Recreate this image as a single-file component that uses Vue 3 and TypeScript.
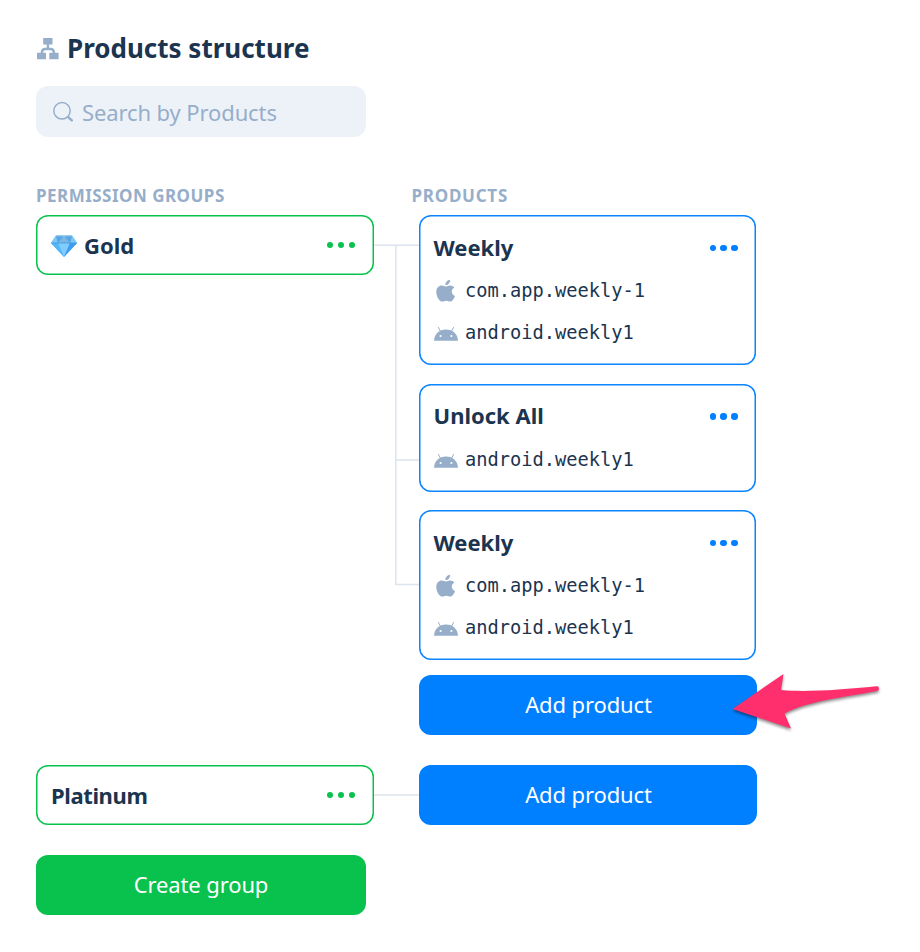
<script setup lang="ts">
interface Sku {
  platform: 'apple' | 'android'
  id: string
}
interface Product {
  name: string
  skus: Sku[]
}
interface Group {
  name: string
  gem: boolean
  height: number
  lines: string
  products: Product[]
}

const groups: Group[] = [
  {
    name: 'Gold',
    gem: true,
    height: 520,
    lines: 'M0 30.25H46M21.8 30V369.5H46M21.8 245H46',
    products: [
      {
        name: 'Weekly',
        skus: [
          { platform: 'apple', id: 'com.app.weekly-1' },
          { platform: 'android', id: 'android.weekly1' },
        ],
      },
      { name: 'Unlock All', skus: [{ platform: 'android', id: 'android.weekly1' }] },
      {
        name: 'Weekly',
        skus: [
          { platform: 'apple', id: 'com.app.weekly-1' },
          { platform: 'android', id: 'android.weekly1' },
        ],
      },
    ],
  },
  { name: 'Platinum', gem: false, height: 60, lines: 'M0 30H46', products: [] },
]
</script>

<template>
  <main class="page">
    <header class="heading">
      <svg class="tree" width="22" height="22" viewBox="0 0 22 22">
        <path d="M6.2 0h9.3v6.500H6.200zM0 14.800h9v6.500H0zM12.300 14.800h9.300v6.500h-9.300z" fill="#96aec9" />
        <path d="M10.900 6v5M4.900 15.500v-1q0-3.500 3.500-3.500h5q3.500 0 3.500 3.500v1" fill="none" stroke="#96aec9" stroke-width="2.400" />
      </svg>
      <h1>Products structure</h1>
    </header>

    <div class="search">
      <svg width="22" height="22" viewBox="0 0 22 22" fill="none" stroke="#96aec9" stroke-linecap="round">
        <circle cx="9" cy="9.800" r="8.200" stroke-width="1.500" />
        <path d="M15.500 16.300l3.300 3" stroke-width="2.500" />
      </svg>
      <span>Search by Products</span>
    </div>

    <div class="labels">
      <span class="label-groups">PERMISSION GROUPS</span>
      <span class="label-products">PRODUCTS</span>
    </div>

    <section v-for="group in groups" :key="group.name" class="row">
      <div class="card group">
        <svg v-if="group.gem" class="gem" width="26" height="22" viewBox="0 0 26 22">
          <path d="M5 0.5h16l5 7.500L13 22 0 8z" fill="#53b5f8" />
          <path d="M5 .5L0 8h7zM21 .5L26 8h-7z" fill="#79c9fb" />
          <path d="M5 .5h8L7 8zM13 .5h8L19 8z" fill="#5aa3dc" />
          <path d="M13 .5L7 8h12z" fill="#79b8e6" />
          <path d="M0 8h7l6 14z" fill="#52b7fa" />
          <path d="M7 8h12l-6 14z" fill="#7fcdff" />
          <path d="M19 8h7L13 22z" fill="#3f9cf0" />
          <path d="M.5 8h25" stroke="#3c8fd8" stroke-width=".7" />
          <path d="M5 .8h16" stroke="#a6dcf8" stroke-width=".8" />
        </svg>
        <strong :class="{ tight: !group.gem }">{{ group.name }}</strong>
        <i class="dots"><b /><b /><b /></i>
      </div>
      <svg class="lines" width="46" :height="group.height" fill="none" stroke="#dce4ed" stroke-width="1.500">
        <path :d="group.lines" />
      </svg>
      <div class="products">
        <article v-for="(product, i) in group.products" :key="i" class="card product">
          <div class="top">
            <strong>{{ product.name }}</strong>
            <i class="dots"><b /><b /><b /></i>
          </div>
          <div v-for="sku in product.skus" :key="sku.id" class="sku">
            <svg v-if="sku.platform === 'apple'" width="24" height="24" viewBox="0 0 24 24" fill="#96aec9">
              <path d="M16.200 .8c.1 3.100-2.200 5.500-4.800 5.300-.2-2.700 2.100-5 4.800-5.300z" />
              <path d="M11.900 7.500c1 0 2.200-1.100 4.100-1.100 1.900 0 3.400.9 4.300 2.200-3.700 2.200-3.100 6.900.7 8.300-.8 2.400-2.700 5.700-4.800 5.700-1.400 0-2.200-.9-4-.9-1.800 0-2.500.9-3.900.9-3 0-6-5.300-6-9.700 0-4.100 2.700-6.400 5.400-6.400 1.800 0 3.200 1 4.200 1z" />
            </svg>
            <svg v-else width="24" height="24" viewBox="0 0 24 24">
              <path d="M0 19.800C.3 13.100 5.300 8.600 12 8.600s11.700 4.500 12 11.200z" fill="#96aec9" />
              <path d="M4.200 6.100l2.500 4.500M19.800 6.100l-2.500 4.500" stroke="#96aec9" stroke-width="1" />
              <circle cx="6.600" cy="15" r="1.100" fill="#fff" />
              <circle cx="17.400" cy="15" r="1.100" fill="#fff" />
            </svg>
            <code>{{ sku.id }}</code>
          </div>
        </article>
        <button class="btn add"><span>Add product</span></button>
      </div>
    </section>

    <button class="btn create"><span>Create group</span></button>

    <svg class="arrow" width="160" height="70" viewBox="0 0 160 70">
      <path
        d="M7.500 39L58.500 4 56 20C82 22.500 117 19.500 151.500 16.200Q154 16 154 18.400Q154 20.600 152 21C122 27 82 31 59.500 43.500L66 58.500Z"
        fill="#ff2f6d"
      />
    </svg>
  </main>
</template>

<style>
body {
  margin: 0;
  background: #fff;
}
</style>

<style scoped>
.page {
  position: relative;
  box-sizing: border-box;
  width: 920px;
  height: 952px;
  padding: 28px 0 0 36px;
  color: #1b344f;
  font-family: 'Noto Sans', 'Open Sans', sans-serif;
  overflow: hidden;
}
.heading {
  display: flex;
  align-items: center;
  height: 40px;
}
.tree {
  margin: 1px 8px 0 1px;
}
h1 {
  margin: 0;
  font-size: 26px;
  line-height: 40px;
  font-weight: 700;
  white-space: nowrap;
}
.search {
  display: flex;
  align-items: center;
  box-sizing: border-box;
  width: 330px;
  height: 51px;
  margin-top: 18px;
  padding-left: 17px;
  gap: 7px;
  border-radius: 12px;
  background: #edf2f9;
  color: #96aec9;
  font-size: 22px;
  letter-spacing: -0.110px;
}
.labels {
  display: flex;
  height: 24px;
  margin: 47px 0 7px;
  color: #96aec9;
  font-size: 17px;
  line-height: 24px;
  font-weight: 700;
  letter-spacing: 0.480px;
  white-space: nowrap;
}
.label-groups {
  width: 375.500px;
}
.label-products {
  letter-spacing: 0.750px;
}
.row {
  display: flex;
  align-items: flex-start;
  margin-bottom: 30px;
}
.card {
  box-sizing: border-box;
  width: 337.500px;
  border-radius: 12px;
  font-size: 22px;
}
.group {
  display: flex;
  align-items: center;
  height: 60px;
  padding: 0 18.500px 0 15px;
  box-shadow: inset 0 0 0 1.500px #09c24e;
  color: #09c24e;
}
.gem {
  margin: 1px 7px 0 0;
}
strong {
  color: #1b344f;
  line-height: 30px;
  white-space: nowrap;
}
.tight {
  letter-spacing: -0.380px;
}
.dots {
  display: flex;
  gap: 4.500px;
  margin-left: auto;
}
.dots b {
  width: 6.300px;
  height: 6.300px;
  border-radius: 50%;
  background: currentColor;
}
.lines {
  flex: none;
  margin-right: -1px;
}
.products {
  display: flex;
  flex-direction: column;
  width: 338px;
}
.product {
  padding: 18px 18.500px 11px 15px;
  margin-bottom: 18.500px;
  box-shadow: inset 0 0 0 1.500px #0a84ff;
  color: #0080ff;
}
.product:nth-last-child(2) {
  margin-bottom: 15px;
}
.top {
  display: flex;
  align-items: center;
  height: 30px;
  margin-bottom: 7px;
}
.top strong {
  margin-bottom: 3px;
}
.sku {
  display: flex;
  align-items: center;
  height: 42px;
  gap: 7.500px;
}
code {
  color: #1b344f;
  font-family: 'DejaVu Sans Mono', monospace;
  font-size: 18.700px;
  line-height: 30px;
}
.btn {
  height: 60px;
  padding: 0;
  border: 0;
  border-radius: 12px;
  color: #fff;
  font: 22px 'Noto Sans', 'Open Sans', sans-serif;
  letter-spacing: -0.120px;
}
.btn span {
  position: relative;
  top: -1px;
}
.add {
  width: 338px;
  padding-left: 2px;
  background: #0080ff;
}
.create {
  display: block;
  width: 330px;
  background: #09c24e;
}
.arrow {
  position: absolute;
  left: 725px;
  top: 670px;
  filter: drop-shadow(0 2px 1.500px rgba(0, 0, 0, 0.45));
}
</style>
